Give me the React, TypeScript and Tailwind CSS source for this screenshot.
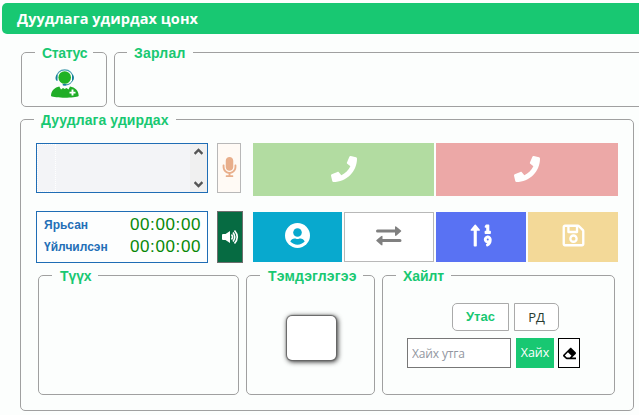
import type { ReactNode } from "react";
import { FaPhone, FaSortNumericUp, FaRegSave, FaEraser, FaMicrophone } from "react-icons/fa";

type PanelProps = { title: string; className: string; legend: string; children?: ReactNode };

function Panel({ title, className, legend, children }: PanelProps) {
  return (
    <fieldset className={`min-w-0 shrink-0 rounded-[5px] border border-[#a0a0a0] ${className}`}>
      <legend
        className={`h-[21px] whitespace-nowrap pt-px font-['Liberation_Sans',sans-serif] text-[14px] leading-[21px] font-bold text-[#18c872] ${legend}`}
      >
        {title}
      </legend>
      {children}
    </fieldset>
  );
}

function AgentIcon() {
  return (
    <svg width="28" height="30" viewBox="0 0 28 30" fill="none">
      <path d="M5.500 9C5.500 4 9 .900 13.700 .900S22 4 22 9" stroke="#4a9fb0" strokeWidth="1.100" />
      <path d="M6.500 5.500V12C3.800 12 4 6 6.500 5.500ZM21 5.500V12C23.700 12 23.500 6 21 5.500Z" fill="#16829b" />
      <circle cx="13.700" cy="8.500" r="6.300" fill="#20b324" />
      <path d="M21.500 11.500C20.500 14 18 15.800 14.500 16" stroke="#2589a0" strokeWidth="1" />
      <ellipse cx="13.500" cy="15.800" rx="2" ry="1" fill="#16829b" />
      <path d="M0 27C0 21.500 4 18.500 8.300 17.600L10 20.500L12 19L13.700 20L15.500 19L17.500 20.500L19 17.600C24 18.500 27.700 21.500 27.700 27C24 29.300 4 29.300 0 27Z" fill="#20ad27" />
      <path d="M21.500 20.600V26.600M18.500 23.600H24.500" stroke="#fff" strokeWidth="1.900" />
    </svg>
  );
}

function SpeakerIcon() {
  return (
    <svg width="17" height="16" viewBox="0 0 17 16" fill="none">
      <path d="M0 6Q0 5 1 5H3.500L8 2V14L3.500 11H1Q0 11 0 10Z" fill="#fff" />
      <path d="M9.500 5.500Q11.500 8 9.500 10.500M11 3.500Q14.500 8 11 12.500M12.500 1.500Q18 8 12.500 14.500" stroke="#fff" strokeWidth="1.600" />
    </svg>
  );
}

function AccountIcon() {
  return (
    <svg width="25" height="25" viewBox="0 0 25 25">
      <circle cx="12.500" cy="12.500" r="12.500" fill="#fff" />
      <circle cx="12.500" cy="9.500" r="4.300" fill="#08a9ce" />
      <path d="M5.300 18.600C6 16.300 8 15.500 9.500 15.500C11 15.500 11.200 16 12.500 16S14 15.500 15.500 15.500C17 15.500 19 16.300 19.700 18.600C16 22.700 9 22.700 5.300 18.600Z" fill="#08a9ce" />
    </svg>
  );
}

function ExchangeIcon() {
  return (
    <svg width="26" height="20" viewBox="0 0 26 20" fill="#808080">
      <path d="M1.500 3.500H19V1Q19 -.5 20.500 .8L25 4.500Q25.500 5 25 5.500L20.500 9.500Q19 10.500 19 9V6.500H1.500Q0 6.500 0 5T1.500 3.500Z" />
      <path d="M24 13H6.500V10.500Q6.500 9 5 10.300L.5 14Q0 14.500 .5 15L5 19Q6.500 20.200 6.500 18.500V16H24Q25.500 16 25.500 14.500T24 13Z" />
    </svg>
  );
}

function Chevron({ down = false }: { down?: boolean }) {
  return (
    <svg width="9" height="7" viewBox="0 0 9 7" fill="none" className={down ? "rotate-180" : ""}>
      <path d="M.6 5.800L4.500 2L8.400 5.800" stroke="#555" strokeWidth="2.400" />
    </svg>
  );
}

function Timer({ label }: { label: string }) {
  return (
    <div className="flex h-[22px] items-center justify-between">
      <span className="font-['Liberation_Sans',sans-serif] text-[12px] font-bold text-[#246fb7]">{label}</span>
      <span className="font-['Liberation_Sans',sans-serif] text-[17px] tracking-[0.600px] text-[#078807]">00:00:00</span>
    </div>
  );
}

export default function App() {
  return (
    <div className="h-[415px] w-[639px] overflow-hidden bg-[#fcfefd] pt-[3px] font-['Open_Sans',sans-serif]">
      <header className="ml-[2px] flex h-[31px] items-center rounded-l-[5px] bg-[#18c872] pl-[15px] text-[14.5px] font-bold tracking-[0.060px] whitespace-nowrap text-white">
        Дуудлага удирдах цонх
      </header>

      <div className="mt-2 ml-[21px] flex gap-[7px]">
        <Panel title="Статус" className="h-[65px] w-[86px]" legend="ml-[13px] w-[58px] pl-[7px] tracking-[-0.350px]">
          <div className="mt-[6px] ml-[29px]">
            <AgentIcon />
          </div>
        </Panel>
        <Panel title="Зарлал" className="h-[65px] w-[560px]" legend="ml-[12px] w-[66px] pl-[7px] tracking-[0.200px]" />
      </div>

      <div className="mt-[2px] ml-[20px]">
        <Panel title="Дуудлага удирдах" className="h-[302px] w-[614px]" legend="ml-[13px] w-[142px] pl-[7px] tracking-[0.100px]">
          <div className="mt-[13px] ml-[15px] flex items-start">
            <div className="flex h-[50px] w-[172px] border border-[#1f6db5] bg-[#f3f4f7]">
              <div className="w-[19px] border border-dotted border-white" />
              <div className="ml-auto flex w-[17px] flex-col items-center justify-between bg-[#f0f0f0] py-[4px]">
                <Chevron />
                <Chevron down />
              </div>
            </div>
            <button className="ml-[9px] flex h-[50px] w-[24px] items-center justify-center border border-[#b8b8b8] bg-[#fffaf5] pb-[3px] text-[#e8ae8b]">
              <FaMicrophone className="h-[20px] w-[15px]" />
            </button>
            <button className="ml-[12px] flex h-[53px] w-[181px] items-center justify-center bg-[#b2dca1] pb-[2px] text-white">
              <FaPhone size={26} />
            </button>
            <button className="ml-[2px] flex h-[53px] w-[182px] items-center justify-center bg-[#eca8a7] pb-[2px] text-white">
              <FaPhone size={26} />
            </button>
          </div>

          <div className="mt-[15px] ml-[15px] flex items-start">
            <div className="h-[52px] w-[172px] border border-[#1f6db5] bg-[#fdfefe] pt-[2px] pr-[6px] pl-[7px]">
              <Timer label="Ярьсан" />
              <Timer label="Үйлчилсэн" />
            </div>
            <button className="ml-[9px] flex h-[52px] w-[26px] items-center justify-center border border-[#6e6e6e] bg-[#066b42]">
              <SpeakerIcon />
            </button>
            <div className="mt-px ml-[10px] flex gap-[2px] text-white">
              <button className="flex h-[50px] w-[89px] items-center justify-center bg-[#08a9ce] pb-[3px]">
                <AccountIcon />
              </button>
              <button className="flex h-[50px] w-[90px] items-center justify-center border border-[#b8b8b8] bg-white pb-[3px]">
                <ExchangeIcon />
              </button>
              <button className="flex h-[50px] w-[90px] items-center justify-center bg-[#5972f3] pb-[3px]">
                <FaSortNumericUp size={25} />
              </button>
              <button className="flex h-[50px] w-[90px] items-center justify-center bg-[#f3d998] pb-[3px]">
                <FaRegSave size={25} />
              </button>
            </div>
          </div>

          <div className="mt-[2px] ml-[17px] flex gap-[7px]">
            <Panel title="Түүх" className="h-[130px] w-[201px]" legend="ml-[13px] w-[46px] pl-[8px] tracking-[-0.100px]" />
            <Panel title="Тэмдэглэгээ" className="h-[130px] w-[129px]" legend="ml-[13px] w-[103px] pl-[8px] tracking-[0.200px]">
              <div className="mt-[30px] ml-[40px] h-[44px] w-[49px] rounded-[5px] bg-white shadow-[0_0_1px_1px_#666,1px_1px_5px_1px_#333]" />
            </Panel>
            <Panel title="Хайлт" className="h-[130px] w-[233px]" legend="ml-[13px] w-[55px] pl-[7px] tracking-[-0.100px]">
              <div className="mt-[17px] ml-[69px] flex gap-[5px]">
                <button className="h-[28px] w-[57px] rounded-l-[5px] border border-[#aaa] bg-white pb-px font-['Liberation_Sans',sans-serif] text-[13px] font-bold text-[#18c872]">
                  Утас
                </button>
                <button className="h-[28px] w-[45px] rounded-r-[5px] border border-[#aaa] bg-white pb-px text-[13px] leading-[24px] text-[#293b32]">
                  РД
                </button>
              </div>
              <div className="mt-[7px] ml-[24px] flex text-[12px]">
                <input
                  placeholder="Хайх утга"
                  className="h-[30px] w-[104px] border border-[#777] bg-white px-[4px] tracking-[-0.150px] placeholder:text-[#9296a0]"
                />
                <button className="ml-[5px] h-[30px] w-[38px] bg-[#18c872] text-[12.5px] text-white">Хайх</button>
                <button className="ml-[4px] flex h-[30px] w-[22px] items-center justify-center border border-black bg-white text-black">
                  <FaEraser size={13} />
                </button>
              </div>
            </Panel>
          </div>
        </Panel>
      </div>
    </div>
  );
}
